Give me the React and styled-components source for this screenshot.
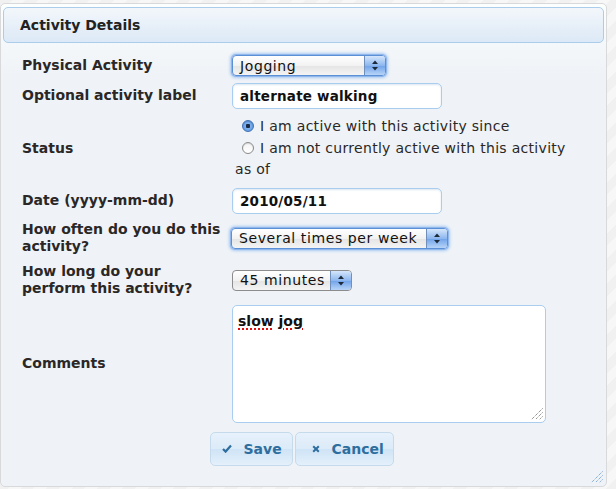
import React from "react";
import styled, { createGlobalStyle, css } from "styled-components";

const GlobalStyle = createGlobalStyle`
  html, body {
    margin: 0;
    padding: 0;
  }
  body {
    width: 616px;
    height: 489px;
    overflow: hidden;
    font-family: "DejaVu Sans", Verdana, sans-serif;
    background: repeating-linear-gradient(135deg, #f1f1f1 0, #f1f1f1 9px, #f7f7f7 9px, #f7f7f7 18px);
  }
`;

const Dialog = styled.div`
  position: relative;
  box-sizing: border-box;
  width: 607px;
  height: 484px;
  margin-top: 3px;
  padding: 3px 2px;
  border: 1px solid #d7d9db;
  border-radius: 5px;
  background: linear-gradient(#fdfefe 0, #eff3f7 70px, #eff3f7 100%);
  display: flex;
  flex-direction: column;
`;

const TitleBar = styled.div`
  height: 34px;
  display: flex;
  align-items: center;
  padding-left: 16px;
  border: 1px solid #a9cdea;
  border-radius: 5px;
  background: linear-gradient(#f3f7fb, #dce9f6);
  color: #222;
  font-size: 14px;
  font-weight: bold;
`;

const Form = styled.div`
  display: grid;
  grid-template-columns: 210px 350px;
  align-items: center;
  row-gap: 7px;
  padding: 12px 0 0 19px;
`;

const Label = styled.div`
  color: #2a2726;
  font-size: 14px;
  font-weight: bold;
  line-height: 17.5px;
`;

const focusRing = css`
  border-color: #5b8fd6;
  box-shadow: 0 0 0 1px #8fb7ec, 0 0 3px 2px #a9c9f2;
`;

const SelectBox = styled.div`
  box-sizing: border-box;
  width: ${(p) => p.$width}px;
  height: 21px;
  margin-left: ${(p) => p.$shift || 0}px;
  display: flex;
  align-items: stretch;
  border: 1px solid #8c8c8c;
  border-radius: 4px;
  background: linear-gradient(#ffffff, #f2f2f2 50%, #e4e4e4 51%, #f4f4f4);
  overflow: hidden;
  font-size: 14px;
  letter-spacing: 0.6px;
  color: #111;
  ${(p) => p.$focused && focusRing}
`;

const SelectText = styled.span`
  flex: 1;
  display: flex;
  align-items: center;
  padding-left: 7px;
  white-space: nowrap;
`;

const ArrowCap = styled.span`
  width: 20px;
  display: flex;
  align-items: center;
  justify-content: center;
  border-left: 1px solid #6f8fba;
  background: linear-gradient(#d5e6fb, #8cb7ef 50%, #6fa2ea 51%, #b7d4f7);
`;

const TextInput = styled.div`
  box-sizing: border-box;
  width: 210px;
  height: 26px;
  display: flex;
  align-items: center;
  padding-left: 7px;
  border: 1px solid #a8cdee;
  border-radius: 5px;
  background: #fff;
  box-shadow: inset 0 1px 2px rgba(120, 160, 200, 0.25);
  color: #111;
  font-size: 13.5px;
  font-weight: bold;
  letter-spacing: 0.2px;
`;

const RadioGroup = styled.div`
  font-size: 14px;
  letter-spacing: 0.3px;
  line-height: 21.5px;
  color: #2a2726;
  padding-left: 3px;
`;

const RadioLine = styled.label`
  display: block;
`;

const Radio = styled.span`
  display: inline-block;
  box-sizing: border-box;
  width: 12px;
  height: 12px;
  margin: 0 6px 0 7px;
  vertical-align: -1px;
  border-radius: 50%;
  border: 1px solid ${(p) => (p.$checked ? "#3f6fb4" : "#8a8a8a")};
  background: ${(p) =>
    p.$checked
      ? "radial-gradient(circle, #1b2a44 0, #1b2a44 2px, #7fb0ee 2.5px, #4b8ee0 100%)"
      : "linear-gradient(#f4f4f4, #ffffff)"};
  box-shadow: inset 0 1px 1px rgba(0, 0, 0, 0.12);
`;

const CommentBox = styled.div`
  position: relative;
  box-sizing: border-box;
  width: 314px;
  height: 118px;
  padding: 6px 5px;
  border: 1px solid #a8cdee;
  border-radius: 5px;
  background: #fff;
  color: #111;
  font-size: 14px;
  font-weight: bold;
  line-height: 18px;
`;

const Misspelled = styled.span`
  text-decoration: underline dotted #e01010;
  text-decoration-thickness: 2px;
  text-underline-offset: 3px;
`;

const Grip = styled.svg`
  position: absolute;
  right: ${(p) => p.$inset}px;
  bottom: ${(p) => p.$inset}px;
`;

const ButtonPane = styled.div`
  display: flex;
  justify-content: center;
  gap: 2px;
  margin-top: 9px;
  padding-right: 4px;
`;

const Button = styled.button`
  box-sizing: border-box;
  width: ${(p) => p.$width}px;
  height: 34px;
  display: flex;
  align-items: center;
  gap: 12px;
  padding: 0 0 0 ${(p) => p.$pad}px;
  border: 1px solid #c5dbec;
  border-radius: 5px;
  background: linear-gradient(#e6f1fb, #dcebf8 50%, #cfe4f6 51%, #e4f0fb);
  color: #2e6e9e;
  font-family: "DejaVu Sans", Verdana, sans-serif;
  font-size: 14px;
  font-weight: bold;
  cursor: pointer;
`;

const SelectArrows = () => (
  <svg width="8" height="11" viewBox="0 0 8 11">
    <path d="M4 0.5 L7 4 H1 Z" fill="#1d2a3a" />
    <path d="M4 10.5 L7 7 H1 Z" fill="#1d2a3a" />
  </svg>
);

const Select = ({ value, width, focused, shift }) => (
  <SelectBox $width={width} $focused={focused} $shift={shift}>
    <SelectText>{value}</SelectText>
    <ArrowCap>
      <SelectArrows />
    </ArrowCap>
  </SelectBox>
);

const ResizeGrip = ({ color, inset }) => (
  <Grip $inset={inset} width="12" height="12" viewBox="0 0 12 12">
    <g stroke={color} strokeWidth="1" strokeDasharray="1 1">
      <line x1="11.5" y1="0.5" x2="0.5" y2="11.5" />
      <line x1="11.5" y1="4.5" x2="4.5" y2="11.5" />
      <line x1="11.5" y1="8.5" x2="8.5" y2="11.5" />
    </g>
  </Grip>
);

const CheckIcon = () => (
  <svg width="10" height="9" viewBox="0 0 10 9">
    <path d="M1 5 L3.6 7.6 L9 1.5" fill="none" stroke="#2e6e9e" strokeWidth="2.2" />
  </svg>
);

const CloseIcon = () => (
  <svg width="8" height="8" viewBox="0 0 8 8">
    <path d="M1.2 1.2 L6.8 6.8 M6.8 1.2 L1.2 6.8" stroke="#2e6e9e" strokeWidth="2" />
  </svg>
);

const App = () => (
  <>
    <GlobalStyle />
    <Dialog>
      <TitleBar>Activity Details</TitleBar>
      <Form>
        <Label>Physical Activity</Label>
        <Select value="Jogging" width={154} focused />

        <Label>Optional activity label</Label>
        <TextInput>alternate walking</TextInput>

        <Label>Status</Label>
        <RadioGroup>
          <RadioLine>
            <Radio $checked />I am active with this activity since
          </RadioLine>
          <RadioLine>
            <Radio />I am not currently active with this activity as of
          </RadioLine>
        </RadioGroup>

        <Label>Date (yyyy-mm-dd)</Label>
        <TextInput>2010/05/11</TextInput>

        <Label>
          How often do you do this
          <br />
          activity?
        </Label>
        <Select value="Several times per week" width={217} focused shift={-1} />

        <Label>
          How long do your
          <br />
          perform this activity?
        </Label>
        <Select value="45 minutes" width={120} />

        <Label>Comments</Label>
        <CommentBox>
          <Misspelled>slow</Misspelled> <Misspelled>jog</Misspelled>
          <ResizeGrip color="#666" inset={2} />
        </CommentBox>
      </Form>
      <ButtonPane>
        <Button $width={83} $pad={11}>
          <CheckIcon />
          Save
        </Button>
        <Button $width={99} $pad={16}>
          <CloseIcon />
          Cancel
        </Button>
      </ButtonPane>
      <ResizeGrip color="#5b93d0" inset={3} />
    </Dialog>
  </>
);

export default App;
